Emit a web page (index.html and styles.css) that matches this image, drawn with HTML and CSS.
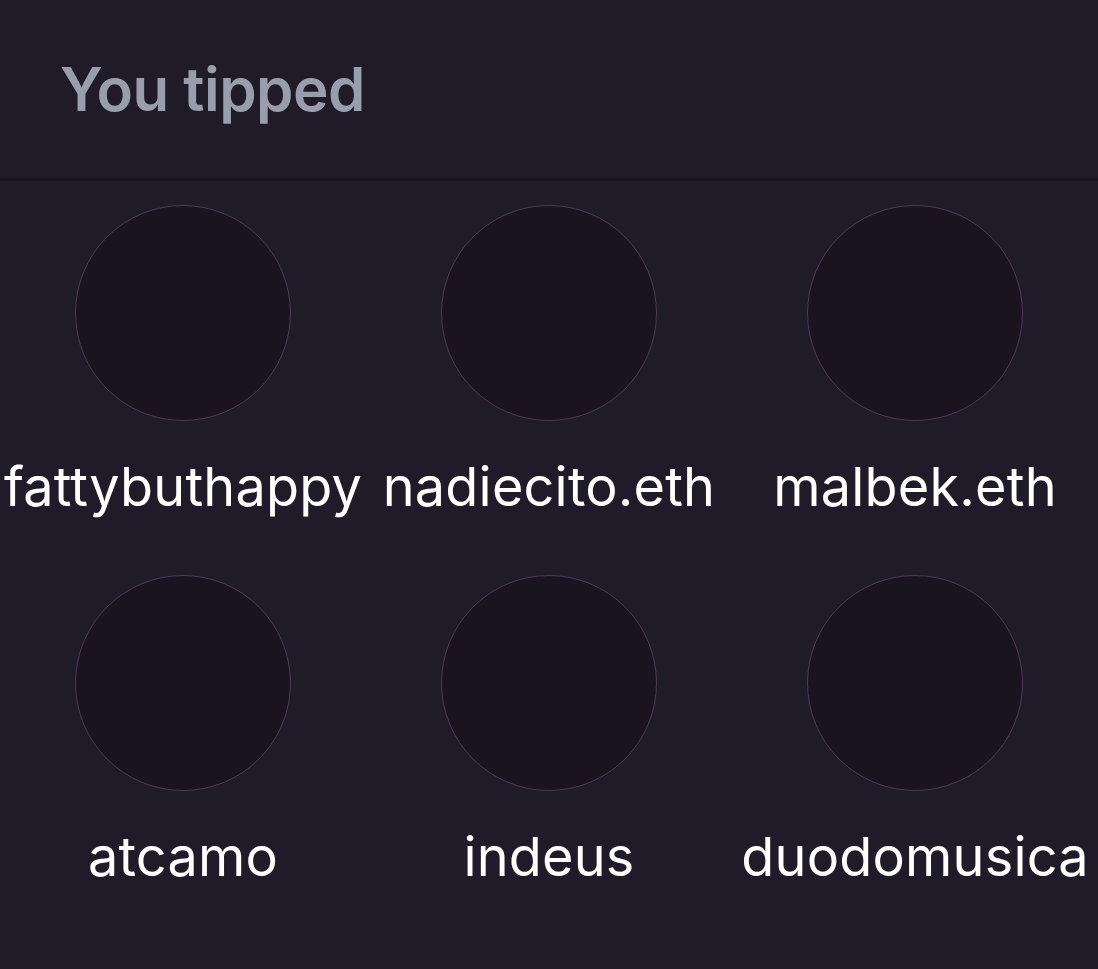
FILE: index.html
```html
<!DOCTYPE html>
<html>
<head>
<meta charset="utf-8">
<link rel="stylesheet" href="styles.css">
</head>
<body>
<div class="panel">
  <header class="panel-header">
    <h2 class="title">You tipped</h2>
  </header>
  <div class="grid">
    <div class="user"><div class="avatar"></div><div class="name">fattybuthappy</div></div>
    <div class="user"><div class="avatar"></div><div class="name">nadiecito.eth</div></div>
    <div class="user"><div class="avatar"></div><div class="name">malbek.eth</div></div>
    <div class="user"><div class="avatar"></div><div class="name">atcamo</div></div>
    <div class="user"><div class="avatar"></div><div class="name">indeus</div></div>
    <div class="user"><div class="avatar"></div><div class="name">duodomusica</div></div>
  </div>
</div>
</body>
</html>
```
FILE: styles.css
```css
html, body {
  margin: 0;
  padding: 0;
  background: #201b29;
}
body {
  font-family: Inter, "Noto Sans", sans-serif;
  width: 1098px;
  height: 969px;
  overflow: hidden;
}
.panel {
  background: #201b29;
}
.panel-header {
  height: 178px;
  display: flex;
  align-items: center;
  padding-left: 60px;
  border-bottom: 3px solid #1a1520;
  box-sizing: content-box;
}
.title {
  margin: 0;
  font-size: 60px;
  font-weight: 600;
  color: #9a9eac;
  line-height: 1;
  letter-spacing: -0.5px;
}
.grid {
  display: grid;
  grid-template-columns: repeat(3, 1fr);
  row-gap: 52px;
  padding-top: 24px;
}
.user {
  display: flex;
  flex-direction: column;
  align-items: center;
}
.avatar {
  width: 216px;
  height: 216px;
  border-radius: 50%;
  background: #1a1421;
  box-sizing: border-box;
  border: 1.5px solid #4d3b58;
}
.name {
  margin-top: 30px;
  font-size: 54px;
  line-height: 72px;
  color: #ffffff;
  white-space: nowrap;
  letter-spacing: 0.2px;
}
```
